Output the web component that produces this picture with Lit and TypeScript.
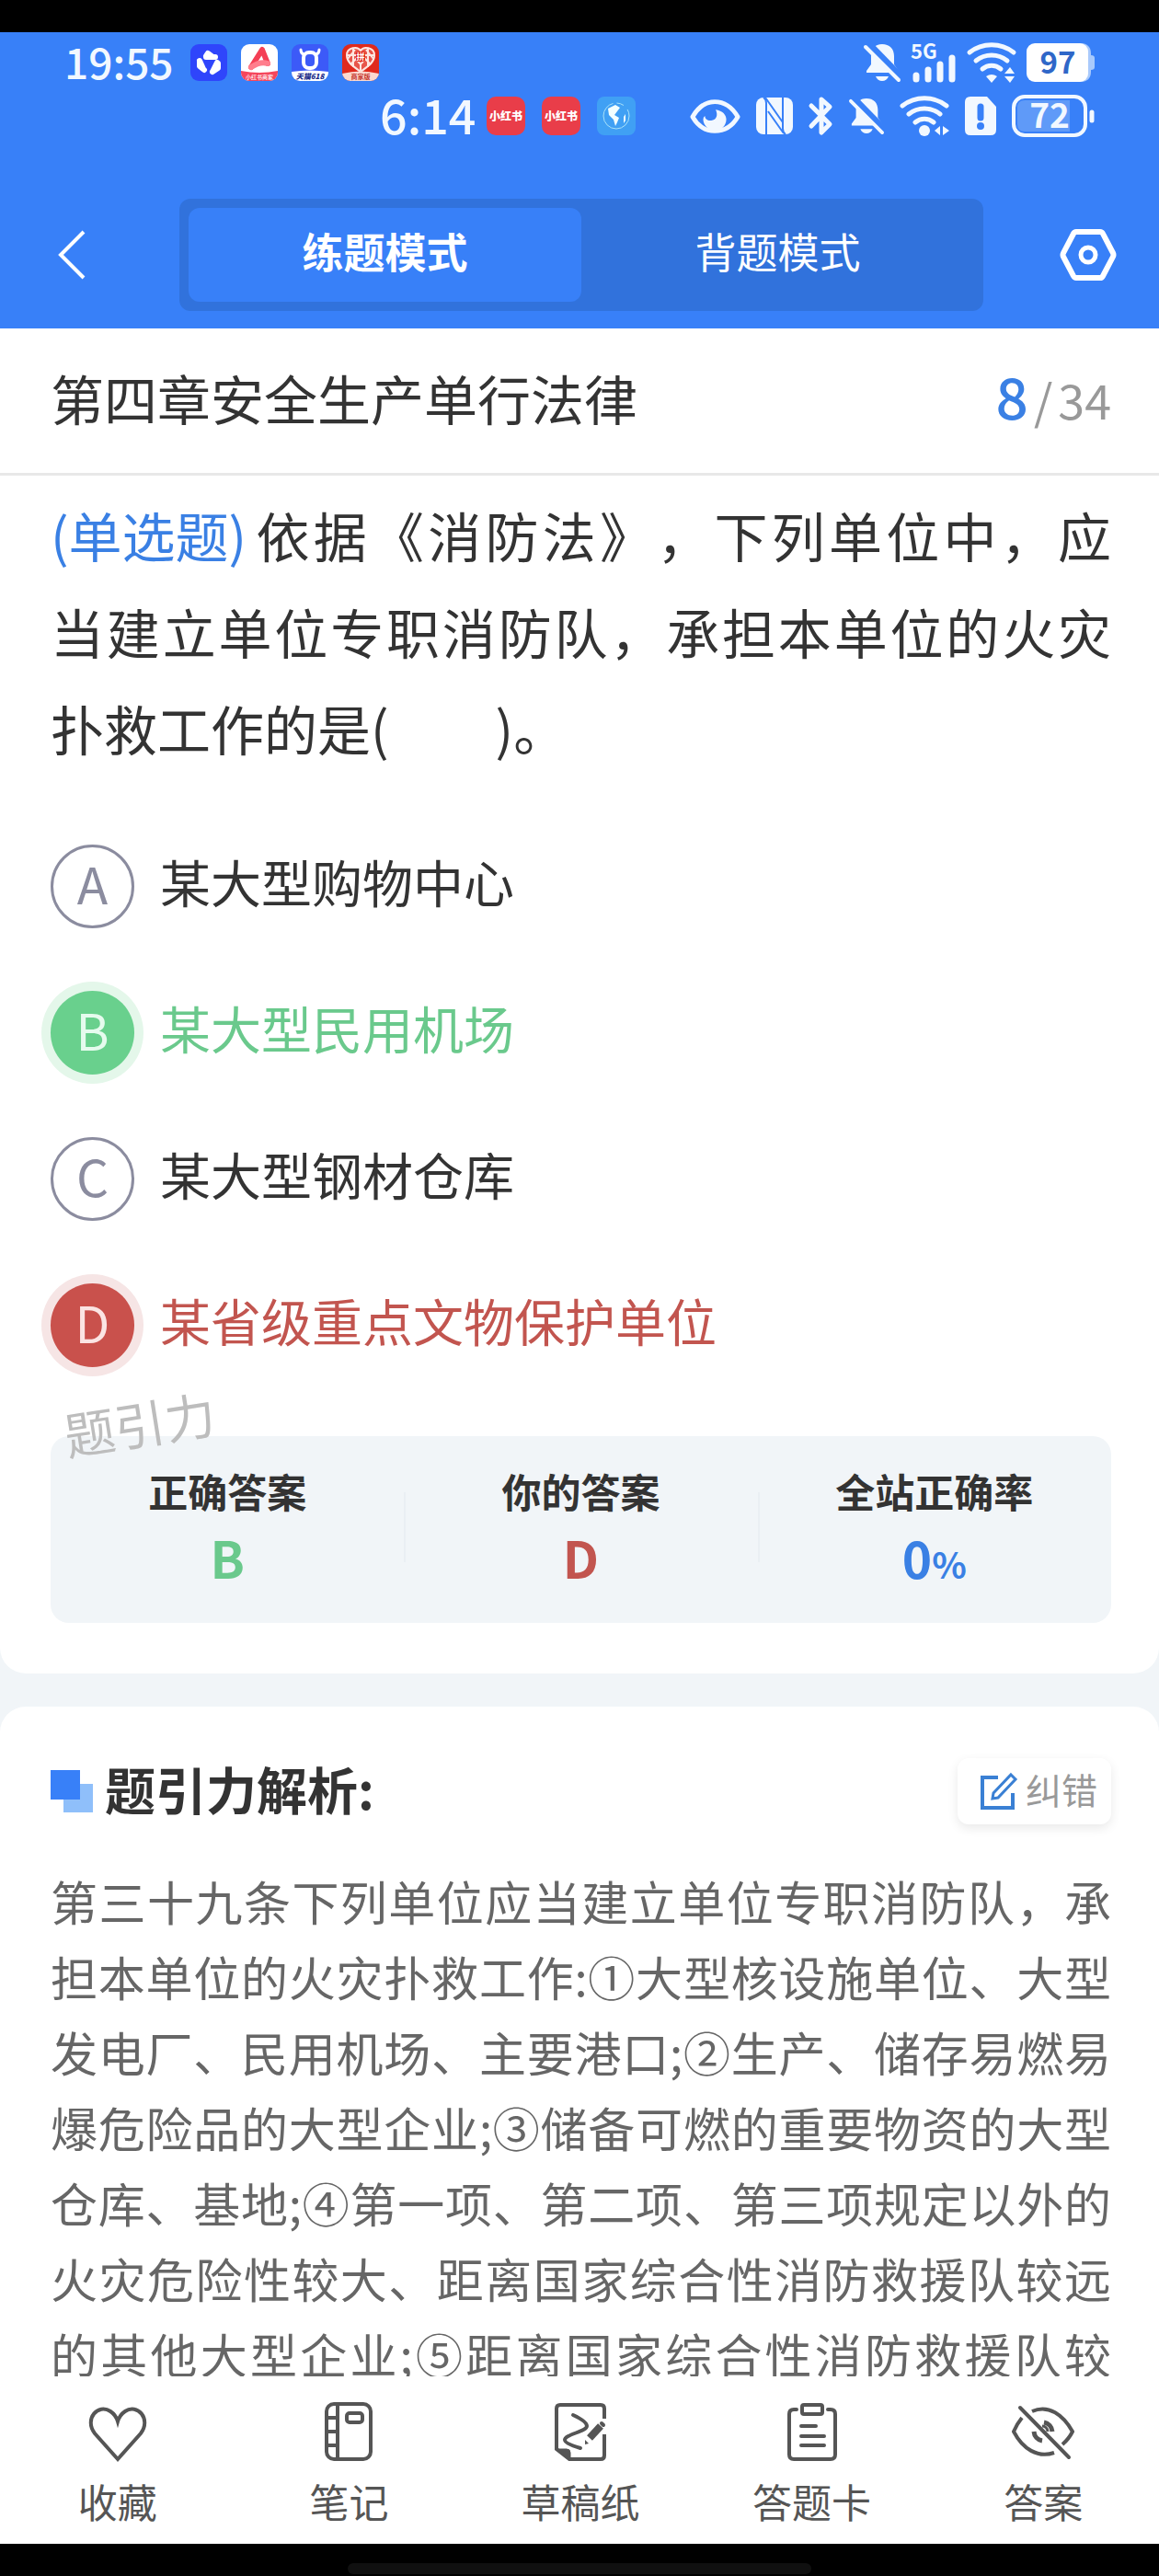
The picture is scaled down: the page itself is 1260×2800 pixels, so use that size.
import { LitElement, html, css, svg, type TemplateResult } from "lit";
import { customElement, state } from "lit/decorators.js";
import { classMap } from "lit/directives/class-map.js";

const bell = svg`
  <path d="M20 2c8 0 13 5 13 13v9l5 7v2H3v-2l5-7v-9C8 7 12 2 20 2z" fill="currentColor"/>
  <path d="M13 37h14c-1 3-4 5-7 5s-6-2-7-5z" fill="currentColor"/>
  <path d="M5 1l37 38" stroke="#3880f8" stroke-width="7"/>
  <path d="M2 5l36 36" stroke="currentColor" stroke-width="4" stroke-linecap="round"/>`;

const wifi = svg`
  <g fill="none" stroke="currentColor" stroke-width="5" stroke-linecap="round">
    <path d="M3 11c14-11 34-11 48 0"/>
    <path d="M10 20c10-8 24-8 34 0"/>
    <path d="M17 29c6-5 14-5 20 0"/>
  </g>`;

@customElement("status-bar")
export class StatusBar extends LitElement {
  static styles = css`
    :host { display: block; color: #f2f8ff; font-weight: 500; }
    svg { display: block; flex: none; overflow: visible; }
    .row { display: flex; align-items: center; justify-content: space-between; }
    .first { height: 66px; padding: 0 69px 0 70px; }
    .second { height: 50px; padding: 0 70px 0 413px; }
    .group { display: flex; align-items: center; }
    .clock { padding-bottom: 4px; font-size: 46px; line-height: 44px; }
    .second .clock { font-size: 52px; line-height: 46px; }
    .apps { gap: 15px; margin-left: 18px; }
    .second .apps { gap: 18px; margin-left: 12px; }
    .signals { gap: 11px; }
    .second .signals { gap: 17px; }
    text { font-family: inherit; }
  `;

  render() {
    return html`
      <div class="row first">
        <div class="group">
          <span class="clock">19:55</span>
          <div class="group apps">
            <svg width="40" height="40" viewBox="0 0 40 40" aria-hidden="true">
              <rect width="40" height="40" rx="9" fill="#2f45fb"/>
              <g fill="none" stroke="#fff" stroke-width="6" stroke-linecap="round" stroke-linejoin="round">
                <path d="M17 14h10M17 13l2-3 4 3"/>
                <path d="M10 18l4 9M10 19v5l5 4"/>
                <path d="M29 20l-5 10M30 21v5l-6 4"/>
              </g>
            </svg>
            <svg width="40" height="40" viewBox="0 0 40 40" aria-hidden="true">
              <defs><clipPath id="c1"><rect width="40" height="40" rx="9"/></clipPath></defs>
              <g clip-path="url(#c1)">
                <rect width="40" height="40" fill="#fff"/>
                <path d="M11 25L23 6l6 15" fill="none" stroke="#f43f55" stroke-width="6" stroke-linecap="round" stroke-linejoin="round"/>
                <path d="M11 25C17 21 23 19 29 21" fill="none" stroke="#ff7d8c" stroke-width="6" stroke-linecap="round"/>
                <path d="M0 29q20 4 40 0v11H0z" fill="#f5465b"/>
                <text x="20" y="38" font-size="6" text-anchor="middle" fill="#fff">小红书商家</text>
              </g>
            </svg>
            <svg width="40" height="40" viewBox="0 0 40 40" aria-hidden="true">
              <defs><clipPath id="c2"><rect width="40" height="40" rx="9"/></clipPath></defs>
              <g clip-path="url(#c2)">
                <rect width="40" height="40" fill="#3c5af8"/>
                <rect x="13" y="9" width="14" height="17" rx="6" fill="none" stroke="#fff" stroke-width="4"/>
                <path d="M13 11q-3-1-3-5M27 11q3-1 3-5" fill="none" stroke="#fff" stroke-width="3" stroke-linecap="round"/>
                <path d="M0 30q20-3 40 0v10H0z" fill="#fff"/>
                <text x="20" y="38" font-size="8" font-weight="900" font-style="italic" text-anchor="middle" fill="#1b2c8a">天猫618</text>
              </g>
            </svg>
            <svg width="40" height="40" viewBox="0 0 40 40" aria-hidden="true">
              <defs><clipPath id="c3"><rect width="40" height="40" rx="9"/></clipPath></defs>
              <g clip-path="url(#c3)">
                <rect width="40" height="40" fill="#e02a1c"/>
                <path d="M20 7c3-5 15-4 15 5 0 8-7 12-15 18C12 24 5 20 5 12c0-9 12-10 15-5z" fill="#e8564a" stroke="#fde6e0" stroke-width="2"/>
                <path d="M12 5v20M28 5v20M5 12h30M20 20v9M6 16l8-10M34 16L26 6M9 22l6-6 5 6 5-6 6 6" fill="none" stroke="#fde6e0" stroke-width="2"/>
                <rect x="15" y="8" width="10" height="11" rx="2" fill="#e02a1c"/>
                <text x="20" y="17" font-size="9" font-weight="700" text-anchor="middle" fill="#fff">拼</text>
                <path d="M0 32q20-5 40 0v8H0z" fill="#fbd9cf"/>
                <text x="20" y="38" font-size="7" font-weight="700" text-anchor="middle" fill="#c4342a">商家版</text>
              </g>
            </svg>
          </div>
        </div>
        <div class="group signals">
          <svg width="40" height="44" viewBox="0 0 40 44" aria-label="静音">${bell}</svg>
          <svg width="50" height="44" viewBox="0 0 50 44" aria-hidden="true">
            <text x="0" y="18" font-size="22" font-weight="700" fill="currentColor">5G</text>
            <path d="M6 36v4M19 30v10M32 24v16M45 17v23" stroke="currentColor" stroke-width="7" stroke-linecap="round"/>
          </svg>
          <svg width="54" height="44" viewBox="0 0 54 44" aria-hidden="true">
            ${wifi}
            <path d="M21 37q6-4 12 0l-6 7zM47 27l5 7H41zM41 37h11l-5 7z" fill="currentColor"/>
          </svg>
          <svg width="75" height="44" viewBox="0 0 75 44" aria-hidden="true">
            <path d="M54 1h5c7 0 11 4 11 11v2q4 0 4 3v10q0 3-4 3v2c0 7-4 11-11 11h-5z" fill="#a9cafc"/>
            <rect y="1" width="67" height="42" rx="9" fill="#fff"/>
            <text x="34" y="34" font-size="33" font-weight="700" text-anchor="middle" fill="#2f67c8">97</text>
          </svg>
        </div>
      </div>
      <div class="row second">
        <div class="group">
          <span class="clock">6:14</span>
          <div class="group apps">
            ${[0, 1].map(() => html`
              <svg width="42" height="42" viewBox="0 0 42 42" aria-hidden="true">
                <rect width="42" height="42" rx="10" fill="#e93d49"/>
                <text x="21" y="26" font-size="12" font-weight="900" text-anchor="middle" fill="#fff">小红书</text>
              </svg>`)}
            <svg width="42" height="42" viewBox="0 0 42 42" aria-hidden="true">
              <rect width="42" height="42" rx="8" fill="#40a0f4"/>
              <circle cx="21" cy="21" r="14" fill="none" stroke="#a9e2f8" stroke-width="1" stroke-dasharray="62 4 8 6"/>
              <path d="M12 13l8-4 5 3-3 4-3 4 5 3-2 5-2 4-2-7-5-5z" fill="#f2ffff"/>
              <path d="M31 19v7l-2 3v-7z" fill="#f2ffff"/>
            </svg>
          </div>
        </div>
        <div class="group signals">
          <svg width="55" height="42" viewBox="0 0 57 42" aria-hidden="true">
            <path d="M3 22C10 10 19 5 28 5s19 5 26 17C47 34 38 38 28 38S10 34 3 22z" fill="none" stroke="currentColor" stroke-width="5" stroke-linejoin="round"/>
            <path d="M17 21c0 4 4 6 8 5 5-1 7-6 4-12 8 1 12 6 12 11 0 7-6 13-13 13S15 31 15 25q0-3 2-4z" fill="currentColor"/>
          </svg>
          <svg width="40" height="42" viewBox="0 0 40 42" aria-hidden="true">
            <rect y="1" width="40" height="40" rx="8" fill="currentColor"/>
            <g fill="none" stroke="#3880f8" stroke-width="2">
              <path d="M8 1q3 2 3 6v34"/>
              <path d="M32 41q-3-2-3-6V1"/>
              <path d="M10 1l19 27M13 16l17 24"/>
            </g>
          </svg>
          <svg width="27" height="42" viewBox="0 0 27 42" aria-hidden="true">
            <path d="M3 10l20 20-9 9V3l9 8L3 32" fill="none" stroke="currentColor" stroke-width="5" stroke-linecap="round" stroke-linejoin="round"/>
          </svg>
          <svg width="38" height="42" viewBox="0 0 40 44" aria-hidden="true">${bell}</svg>
          <svg width="54" height="44" viewBox="0 0 54 44" aria-hidden="true">
            ${wifi}
            <circle cx="27" cy="38" r="6" fill="currentColor"/>
            <path d="M44 33v10l-6-5zM47 33l7 5-7 5z" fill="currentColor"/>
          </svg>
          <svg width="34" height="42" viewBox="0 0 34 42" aria-hidden="true">
            <path d="M6 0h18l10 11v25q0 6-6 6H6q-6 0-6-6V6q0-6 6-6z" fill="currentColor"/>
            <path d="M17 11v12" stroke="#3880f8" stroke-width="7" stroke-linecap="round"/>
            <circle cx="17" cy="32" r="4" fill="#3880f8"/>
          </svg>
          <svg width="90" height="46" viewBox="0 0 90 46" aria-hidden="true">
            <rect x="2" y="2" width="78" height="42" rx="12" fill="none" stroke="currentColor" stroke-width="4"/>
            <path d="M14 6h49v34H14q-8 0-8-8V14q0-8 8-8z" fill="#5f9af8"/>
            <text x="41" y="36" font-size="37" font-weight="700" text-anchor="middle" fill="currentColor">72</text>
            <path d="M87 19v9" stroke="currentColor" stroke-width="5" stroke-linecap="round"/>
          </svg>
        </div>
      </div>
    `;
  }
}

interface Option { key: string; text: string; mark: "" | "right" | "wrong"; }
interface Tool { label: string; icon: TemplateResult; }

const options: Option[] = [
  { key: "A", text: "某大型购物中心", mark: "" },
  { key: "B", text: "某大型民用机场", mark: "right" },
  { key: "C", text: "某大型钢材仓库", mark: "" },
  { key: "D", text: "某省级重点文物保护单位", mark: "wrong" },
];

const tools: Tool[] = [
  {
    label: "收藏",
    icon: svg`<path d="M34 64L9 36C-3 20 13 3 26 12q6 4 8 11 2-7 8-11c13-9 29 8 17 24z" stroke-width="4"/>`,
  },
  {
    label: "笔记",
    icon: svg`
      <rect x="10" y="4" width="48" height="60" rx="8" stroke-width="4"/>
      <path d="M22 4v60M10 19h12M10 34h12M10 49h12" stroke-width="4"/>
      <rect x="32" y="14" width="17" height="10" rx="3" stroke-width="4"/>`,
  },
  {
    label: "草稿纸",
    icon: svg`
      <path d="M60 20V9q0-4-4-4H12q-4 0-4 4v44l14 11h34q4 0 4-4V37" stroke-width="4"/>
      <path d="M8 53h11q4 0 4 4v8z" fill="currentColor"/>
      <path d="M26 16q15 7 15 12c0 6-24 9-24 15q0 4 17 9" stroke-width="4" stroke-linecap="round"/>
      <path d="M44 41l12-13" stroke-width="8"/>
      <path d="M57 25l2 2" stroke-width="4" stroke-linecap="round"/>
      <path d="M39 43l4 4-4 1z" fill="currentColor" stroke="none"/>`,
  },
  {
    label: "答题卡",
    icon: svg`
      <path d="M17 10h-3q-5 0-5 5v44q0 5 5 5h40q5 0 5-5V15q0-5-5-5h-3" stroke-width="4" stroke-linecap="round"/>
      <rect x="23" y="5" width="22" height="10" rx="2" stroke-width="4"/>
      <path d="M22 28h16M22 39h25M22 49h25" stroke-width="4" stroke-linecap="round"/>`,
  },
  {
    label: "答案",
    icon: svg`
      <path d="M22 12C40 4 56 16 66 34q-4 8-11 14M46 57C28 63 12 53 2 34q4-9 9-15" stroke-width="4"/>
      <path d="M35 24a11 11 0 0 1 9 10M33 44a11 11 0 0 1-9-10" stroke-width="5"/>
      <path d="M33 28a6 6 0 0 1 6 6" stroke-width="3"/>
      <path d="M9 8l53 54" stroke-width="4" stroke-linecap="round"/>`,
  },
];

@customElement("app-root")
export class AppRoot extends LitElement {
  static styles = css`
    :host {
      display: flex;
      flex-direction: column;
      height: 100vh;
      box-sizing: border-box;
      padding-top: 35px;
      background: #000;
      color: #333;
      font-family: "Noto Sans CJK SC", "Noto Sans", sans-serif;
      text-spacing-trim: space-all;
    }
    * { box-sizing: border-box; margin: 0; }
    button { border: 0; padding: 0; background: none; color: inherit; font: inherit; cursor: pointer; }
    svg { display: block; flex: none; fill: none; stroke: currentColor; }

    .top { flex: none; background: #3880f8; color: #fff; }
    .modes { display: flex; align-items: center; justify-content: space-between; padding: 65px 46px 19px 56px; }
    .icon-btn { display: grid; place-items: center; width: 44px; height: 72px; }
    .icon-btn.wide { width: 62px; }
    .switch { display: grid; grid-template-columns: 1fr 1fr; flex: 1; margin: 0 83px 0 95px; padding: 10px; border-radius: 12px; background: #3172dc; }
    .mode { height: 102px; padding-bottom: 8px; border-radius: 12px; font-size: 45px; line-height: 66px; }
    .mode.on { background: #3880f8; font-weight: 700; }

    .chapter { flex: none; display: flex; align-items: center; justify-content: space-between; height: 160px; padding: 0 52px 8px 55px; border-bottom: 3px solid #e8e8e8; background: #fff; }
    .chapter h1 { font-size: 58px; line-height: 84px; font-weight: 400; }
    .count { display: flex; align-items: baseline; gap: 6px; font-size: 52px; line-height: 84px; color: #999; }
    .count b { font-size: 62px; font-weight: 500; color: #3a80e4; }

    main { flex: 1; min-height: 0; overflow-y: auto; scrollbar-width: none; background: #f1f5f8; }
    .card { background: #fff; padding: 0 52px 0 55px; }
    .quiz { border-radius: 0 0 28px 28px; padding-top: 12px; padding-bottom: 55px; }
    .stem { font-size: 58px; line-height: 105px; text-align: justify; }
    .kind { display: inline-block; margin-right: 6px; color: #3a80e4; }
    .keep { white-space: nowrap; }
    .options { border: 0; padding: 0; margin-top: 74px; display: grid; gap: 68px; justify-items: start; }
    .option { display: flex; align-items: center; gap: 28px; font-size: 55px; line-height: 79px; }
    .name { padding-bottom: 12px; }
    .mark { display: grid; place-items: center; color: #8b8c9f; }
    .mark input, .letter { grid-area: 1 / 1; }
    .letter { padding-bottom: 8px; }
    .mark input { appearance: none; width: 91px; height: 91px; border: 3px solid #8b8c9f; border-radius: 50%; }
    .right { color: #6ac98c; }
    .wrong { color: #c2554f; }
    .right .mark { color: #e6fbee; }
    .wrong .mark { color: #fbe4e3; }
    .right input { border: 0; background: #69d08d; box-shadow: 0 0 0 10px #e4f7ea; }
    .wrong input { border: 0; background: #c9514c; box-shadow: 0 0 0 10px #f6e5e5; }

    .result { position: relative; margin-top: 75px; }
    .watermark { position: absolute; left: 14px; top: -54px; font-size: 55px; line-height: 78px; color: #bdbdbd; transform: rotate(-9deg); }
    .stats { display: grid; grid-template-columns: repeat(3, 1fr); padding: 27px 0 32px; border-radius: 20px; background: #f1f5f8; text-align: center; }
    .stat + .stat { background: linear-gradient(#eaeff3, #eaeff3) left 34px / 2px 76px no-repeat; }
    .stat dt { font-size: 43px; line-height: 64px; font-weight: 700; }
    .stat dd { font-size: 55px; line-height: 80px; font-weight: 700; }
    .blue { color: #3a80e4; }
    .blue small { font-size: 39px; line-height: 40px; }

    .analysis { margin-top: 36px; border-radius: 28px 28px 0 0; padding-top: 56px; }
    .head { display: flex; align-items: center; justify-content: space-between; }
    .title { display: flex; align-items: center; gap: 13px; font-size: 55px; line-height: 64px; font-weight: 700; }
    .title span { padding-bottom: 8px; }
    .fix { display: flex; align-items: center; gap: 8px; height: 72px; padding: 0 15px 0 24px; border-radius: 12px; background: #fff; box-shadow: 0 4px 12px rgba(0, 0, 0, 0.09); font-size: 39px; line-height: 56px; color: #999; }
    .fix span { padding-bottom: 6px; }
    .fix svg { color: #3a80d4; }
    .text { margin-top: 42px; font-size: 51px; line-height: 82px; color: #666; text-align: justify; text-align-last: justify; }

    .tools { flex: none; display: grid; grid-template-columns: repeat(5, 1fr); height: 182px; padding-left: 2px; background: #fff; color: #555; }
    .tool { display: flex; flex-direction: column; align-items: center; padding-top: 26px; font-size: 43px; line-height: 64px; }
    .tool svg { margin-bottom: 9px; }
    .home { flex: none; display: grid; align-items: end; justify-items: center; height: 35px; padding-bottom: 2px; }
    .home span { width: 40%; height: 12px; border-radius: 6px; background: #101010; }
  `;

  @state() private mode = 0;

  render() {
    return html`
      <header class="top">
        <status-bar></status-bar>
        <nav class="modes">
          <button class="icon-btn" aria-label="返回">
            <svg width="44" height="60" viewBox="0 0 44 60"><path d="M35 5L10 30l25 25" stroke-width="4"/></svg>
          </button>
          <div class="switch">
            ${["练题模式", "背题模式"].map((name, i) => html`
              <button class=${classMap({ mode: true, on: this.mode === i })} @click=${() => (this.mode = i)}>${name}</button>`)}
          </div>
          <button class="icon-btn wide" aria-label="设置">
            <svg width="62" height="58" viewBox="0 0 62 58">
              <path d="M18 4h26q2 0 3 2l11 21q1 2 0 4L47 52q-1 2-3 2H18q-2 0-3-2L4 31q-1-2 0-4L15 6q1-2 3-2z" stroke-width="6"/>
              <circle cx="31" cy="29" r="8" stroke-width="5"/>
            </svg>
          </button>
        </nav>
      </header>

      <section class="chapter">
        <h1>第四章安全生产单行法律</h1>
        <p class="count"><b>8</b><span>/</span><span>34</span></p>
      </section>

      <main>
        <section class="card quiz">
          <p class="stem"><span class="kind">(单选题)</span>依据《消防法》，下列单位中，应<span class="keep">当建</span>立单位专职消防队，承担本单位的火灾扑救工作的是(&#12288;&#12288;)。</p>
          <fieldset class="options" aria-label="选项">
            ${options.map((o) => html`
              <label class="option ${o.mark}">
                <span class="mark">
                  <input type="radio" name="answer" value=${o.key} ?checked=${o.mark === "wrong"}>
                  <span class="letter">${o.key}</span>
                </span>
                <span class="name">${o.text}</span>
              </label>`)}
          </fieldset>
          <div class="result">
            <dl class="stats">
              <div class="stat"><dt>正确答案</dt><dd class="right">B</dd></div>
              <div class="stat"><dt>你的答案</dt><dd class="wrong">D</dd></div>
              <div class="stat"><dt>全站正确率</dt><dd class="blue">0<small>%</small></dd></div>
            </dl>
            <span class="watermark">题引力</span>
          </div>
        </section>

        <section class="card analysis">
          <div class="head">
            <h2 class="title">
              <svg width="46" height="46" viewBox="0 0 46 46" aria-hidden="true">
                <path d="M14 15h32v31H14z" fill="#8fbffa" stroke="none"/>
                <path d="M0 0h32v32H0z" fill="#3880f8" stroke="none"/>
              </svg>
              <span>题引力解析:</span>
            </h2>
            <button class="fix">
              <svg width="42" height="42" viewBox="0 0 42 42" aria-hidden="true">
                <path d="M20 6H3v33h33V23" stroke-width="4"/>
                <path d="M34 3l5 5-19 20-6 1 1-6z" stroke-width="3"/>
              </svg>
              <span>纠错</span>
            </button>
          </div>
          <p class="text">第三十九条下列单位应当建立单位专职消防队，承担本单位的火灾扑救工作:①大型核设施单位、大型发电厂、民用机场、主要港口;②生产、储存易燃易爆危险品的大型企业;③储备可燃的重要物资的大型仓库、基地;④第一项、第二项、第三项规定以外的火灾危险性较大、距离国家综合性消防救援队较远的其他大型企业;⑤距离国家综合性消防救援队较</p>
        </section>
      </main>

      <nav class="tools">
        ${tools.map((t) => html`
          <button class="tool">
            <svg width="68" height="68" viewBox="0 0 68 68" aria-hidden="true">${t.icon}</svg>
            <span>${t.label}</span>
          </button>`)}
      </nav>
      <div class="home"><span></span></div>
    `;
  }
}
